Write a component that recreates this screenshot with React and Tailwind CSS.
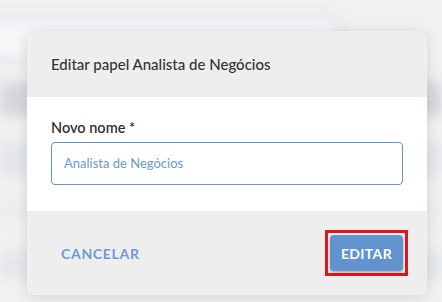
import React from "react";

// blurred page behind the dialog
function Backdrop() {
  return (
    <div className="absolute inset-0 blur-[6px]">
      <div className="flex flex-col pt-[16px]">
        <div className="ml-[-20px] w-[362px] h-[46px] rounded-r-xl border-[5px] border-[#dde3ec] bg-[#f6f6f6]" />
        <div className="h-[20px]" />
        <div className="h-[34px] bg-[#d6d7db]" />
        <div className="h-[26px]" />
        <div className="h-[34px] bg-[#e3e6eb]" />
        <div className="h-[28px]" />
        <div className="h-[12px] bg-[#e9ebee]" />
        <div className="h-[36px]" />
        <div className="h-[26px] bg-[#e3e6eb]" />
      </div>
    </div>
  );
}

export default function App() {
  return (
    <div
      className="relative w-[442px] h-[302px] overflow-hidden bg-[#f1f1f1]"
      style={{ fontFamily: "Lato, 'Noto Sans', sans-serif" }}
    >
      <Backdrop />
      <div className="relative pt-[31px] pl-[27px]">
        <div className="w-[400px] rounded-md overflow-hidden bg-[#eeeeee] shadow-[0_2px_14px_rgba(0,0,0,0.12)]">
          {/* Header */}
          <div className="h-[66px] flex items-center px-6">
            <h2 className="text-[15px] text-[#333333] font-medium">Editar papel Analista de Negócios</h2>
          </div>

          {/* Body */}
          <div className="bg-white h-[114px] px-6 pt-[22px]">
            <label className="block text-[14.5px] font-semibold text-[#333333] leading-[18px]">Novo nome *</label>
            <div className="mt-[5px] h-[43px] rounded border border-[#6494cf] flex items-center px-[12px]">
              <span className="text-[13px] text-[#6a9ad6]">Analista de Negócios</span>
            </div>
          </div>

          {/* Footer */}
          <div className="h-[84px] flex items-center justify-between pl-[34px] pr-[19px]">
            <button className="text-[14px] font-bold text-[#6b9bd6] tracking-wider">CANCELAR</button>
            <div className="border-[3px] border-[#e3141c] p-[2px]">
              <button className="w-[73px] h-[36px] rounded bg-[#6193cf] text-white font-bold text-[14px] tracking-wide shadow-[0_2px_3px_rgba(0,0,0,0.25)]">
                EDITAR
              </button>
            </div>
          </div>
        </div>
      </div>
    </div>
  );
}
